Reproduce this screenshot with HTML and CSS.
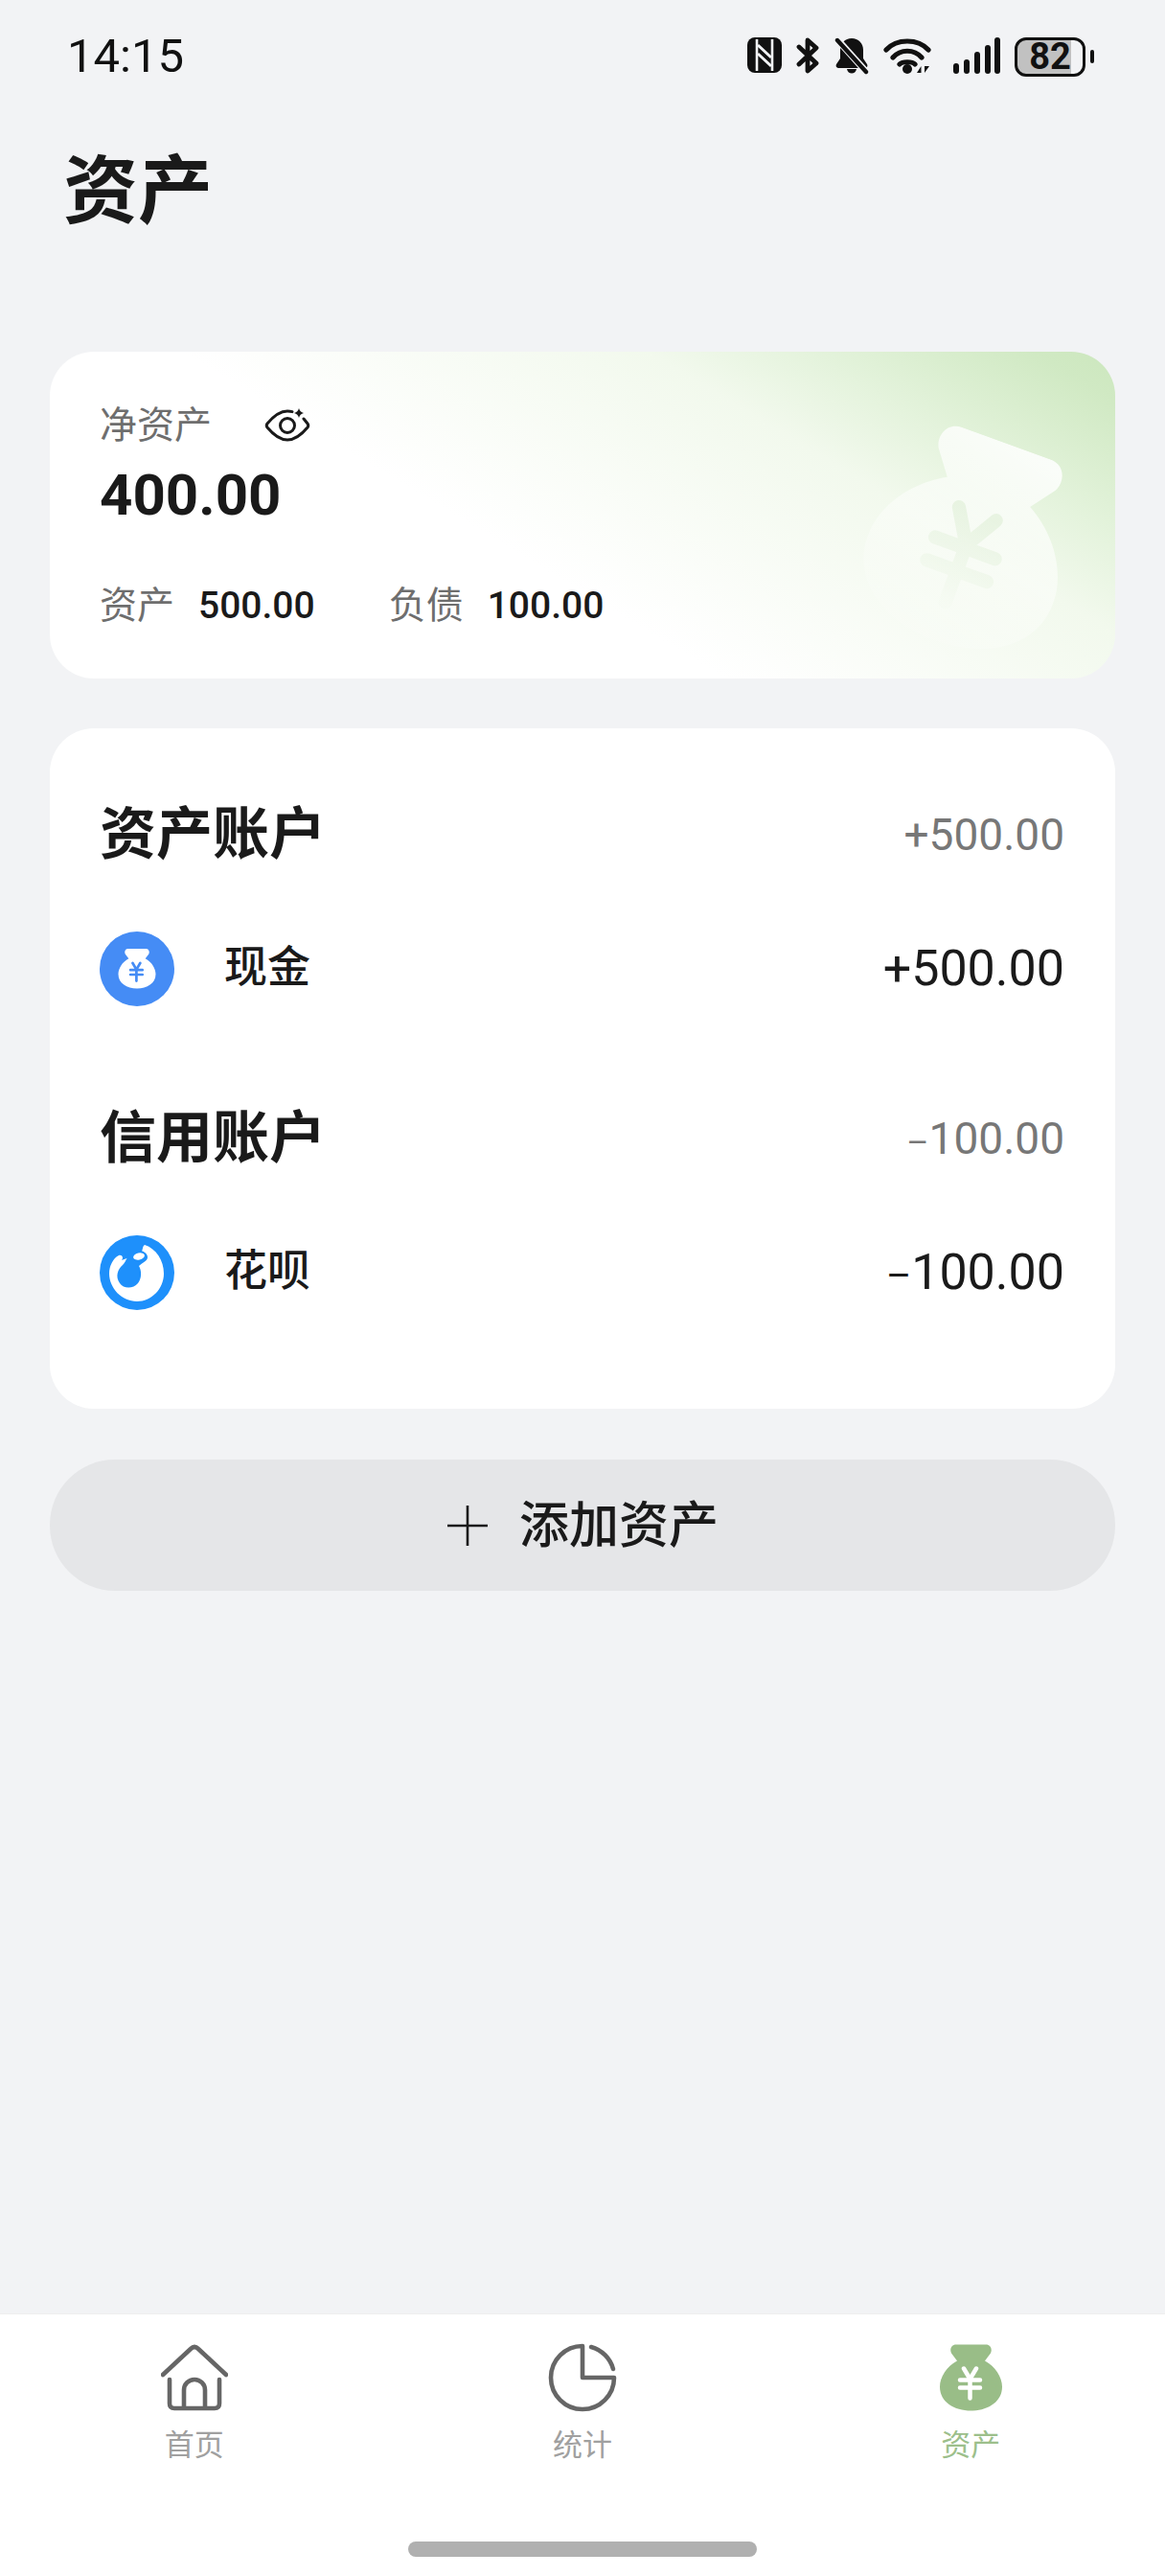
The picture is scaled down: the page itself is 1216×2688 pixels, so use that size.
FILE: index.html
```html
<!DOCTYPE html>
<html lang="zh-CN">

<head>
    <meta charset="UTF-8">
    <meta name="viewport" content="width=device-width, initial-scale=1.0">
    <title>资产</title>

    <link rel="stylesheet" href="styles.css">

</head>

<body>
    <div class="status-bar">
        <span class="time">14:15</span>
        <div class="status-icons">
            <svg width="36" height="37" viewBox="0 0 36 37">
                <rect width="36" height="37" rx="8" fill="#111"/>
                <path d="M10 2V35M26 2V35" fill="none" stroke="#f2f3f5" stroke-width="2.6"/>
                <path d="M11 8L25 21M11 17L25 30" fill="none" stroke="#f2f3f5" stroke-width="3"/>
            </svg>
            <svg width="25" height="38" viewBox="0 0 25 38">
                <path d="M3 10L21 27L12 35V3L21 11L3 28" fill="none" stroke="#111" stroke-width="4.8" stroke-linejoin="round" stroke-linecap="round"/>
            </svg>
            <svg width="36" height="39" viewBox="0 0 36 39">
                <path d="M18 1C11 1 6 6 6 13V22L2 28C1 30 2 32 5 32H31C34 32 35 30 34 28L30 22V13C30 6 25 1 18 1Z" fill="#111"/>
                <path d="M13 33H23C22 39 14 39 13 33Z" fill="#111"/>
                <path d="M1 0L35 38" stroke="#f2f3f5" stroke-width="7"/>
                <path d="M3 3L33 36" stroke="#111" stroke-width="4.4" stroke-linecap="round"/>
            </svg>
            <svg class="wifi" width="50" height="38" viewBox="0 0 50 38">
                <path d="M3 13C14 1 36 1 47 13M10 21C18 12 32 12 40 21M17 28C20 25 30 25 33 28" fill="none" stroke="#111" stroke-width="5.2" stroke-linecap="round"/>
                <circle cx="25" cy="33" r="5" fill="#111"/>
                <path d="M35 37L39.5 30V37ZM43 30L48 30L43 37Z" fill="#111"/>
            </svg>
            <svg width="49" height="38" viewBox="0 0 49 38">
                <rect x="0" y="27" width="6" height="11" rx="3" fill="#111"/>
                <rect x="11" y="23" width="6" height="15" rx="3" fill="#111"/>
                <rect x="22" y="15" width="6" height="23" rx="3" fill="#111"/>
                <rect x="33" y="8" width="6" height="30" rx="3" fill="#111"/>
                <rect x="43" y="0" width="6" height="38" rx="3" fill="#111"/>
            </svg>
            <div class="battery"><span class="battery-level">82</span><span class="battery-nub"></span></div>
        </div>
    </div>

    <h1 class="page-title">资产</h1>

    <section class="card net-card">
        <svg class="net-bag" width="206" height="219" viewBox="0 0 65 69">
            <path d="M17 0H48C53 0 55 5 53 9L47 17C58 23 65 34 65 44C65 60 50 69 32.5 69C15 69 0 60 0 44C0 34 7 23 18 17L12 9C10 5 12 0 17 0Z" fill="url(#bagFade)"/>
            <path d="M25 25L31.5 36L38 25M21 37H42M21 45H42M31.5 36V56" fill="none" stroke="url(#yenFade)" stroke-width="4.5" stroke-linecap="round"/>
            <defs>
                <linearGradient id="bagFade" x1="0.6" y1="0" x2="0.4" y2="1">
                    <stop offset="0" stop-color="#fff" stop-opacity="0.85"/>
                    <stop offset="1" stop-color="#fff" stop-opacity="0.1"/>
                </linearGradient>
                <linearGradient id="yenFade" gradientUnits="userSpaceOnUse" x1="32" y1="25" x2="30" y2="56">
                    <stop offset="0" stop-color="#d9eccf" stop-opacity="0.5"/>
                    <stop offset="1" stop-color="#d9eccf" stop-opacity="0.05"/>
                </linearGradient>
            </defs>
        </svg>
        <div class="net-head">
            <span class="net-label">净资产</span>
            <svg width="48" height="36" viewBox="0 0 48 36">
                <path d="M29 3.6C27.5 3.2 26 3 24 3C15 3 8 10 3 16Q1.5 18 3 20C8 26 15 33 24 33C33 33 40 26 45 20Q46.5 18 45 16L41 11" fill="none" stroke="#1a1a1a" stroke-width="3" stroke-linecap="round"/>
                <circle cx="24" cy="18" r="7.5" fill="none" stroke="#1a1a1a" stroke-width="3"/>
                <path d="M36 0Q37 4 41 5Q37 6 36 10Q35 6 31 5Q35 4 36 0Z" fill="#1a1a1a"/>
            </svg>
        </div>
        <div class="net-value">400.00</div>
        <div class="net-row">
            <span class="net-label">资产</span>
            <span class="net-num">500.00</span>
            <span class="net-label net-second">负债</span>
            <span class="net-num">100.00</span>
        </div>
    </section>

    <section class="card accounts">
        <div class="group-head">
            <span class="group-title">资产账户</span>
            <span class="group-sum">+500.00</span>
        </div>
        <div class="account">
            <svg class="account-icon" width="78" height="78" viewBox="0 0 78 78">
                <circle cx="39" cy="39" r="39" fill="#458cf5"/>
                <path transform="translate(19.5 18) scale(0.6)" d="M17 0H48C53 0 55 5 53 9L47 17C58 23 65 34 65 44C65 60 50 69 32.5 69C15 69 0 60 0 44C0 34 7 23 18 17L12 9C10 5 12 0 17 0Z" fill="#fff"/>
                <path transform="translate(19.5 18) scale(0.6)" d="M25 25L31.5 36L38 25M21 37H42M21 45H42M31.5 36V56" fill="none" stroke="#458cf5" stroke-width="4.5" stroke-linecap="round"/>
            </svg>
            <span class="account-name">现金</span>
            <span class="account-sum">+500.00</span>
        </div>
        <div class="group-head group-credit">
            <span class="group-title">信用账户</span>
            <span class="group-sum"><span class="minus">–</span>100.00</span>
        </div>
        <div class="account">
            <svg class="account-icon" width="78" height="78" viewBox="0 0 78 78">
                <circle cx="39" cy="39" r="39" fill="#1e90fb"/>
                <path d="M47 10C59 14 67 26 67 40C67 56 54 69 39 69C23 69 10 55 10 40C10 32 14 24 20 21C24 20 25 24 23 26L34 22L44 17C45 14 45 11 47 10Z" fill="#fff"/>
                <path d="M33 17C41 14 50 17 50 23C50 27 45 28 41 32C44 37 44 45 40 50C35 56 25 56 21 50C16 43 19 35 24 31C28 27 29 21 33 17Z" fill="#1e90fb"/>
                <ellipse cx="41" cy="22" rx="6" ry="3.5" transform="rotate(-12 41 22)" fill="#fff"/>
            </svg>
            <span class="account-name">花呗</span>
            <span class="account-sum"><span class="minus">–</span>100.00</span>
        </div>
    </section>

    <div class="add-btn">
        <svg width="44" height="44" viewBox="0 0 44 44">
            <path d="M22 1V43M1 22H43" stroke="#1a1a1a" stroke-width="2.6"/>
        </svg>
        <span class="add-text">添加资产</span>
    </div>

    <nav class="tab-bar">
        <div class="tabs">
            <div class="tab">
                <svg width="70" height="72" viewBox="0 0 70 72">
                    <path d="M2 33L31 6Q35 2 39 6L68 33M9 38V63Q9 68 14 68H56Q61 68 61 63V38M24 68V49A11 11 0 0 1 46 49V68" fill="none" stroke="#666" stroke-width="4.6" stroke-linecap="round" stroke-linejoin="round"/>
                </svg>
                <span class="tab-label">首页</span>
            </div>
            <div class="tab">
                <svg width="74" height="72" viewBox="0 0 74 72">
                    <path d="M37 3A33 33 0 1 0 70 36H37ZM46 4A33 33 0 0 1 69 27" fill="none" stroke="#666" stroke-width="4.6" stroke-linejoin="round" stroke-linecap="round"/>
                </svg>
                <span class="tab-label">统计</span>
            </div>
            <div class="tab tab-active">
                <svg width="65" height="72" viewBox="0 0 65 72">
                    <path transform="translate(0 1.5)" d="M17 0H48C53 0 55 5 53 9L47 17C58 23 65 34 65 44C65 60 50 69 32.5 69C15 69 0 60 0 44C0 34 7 23 18 17L12 9C10 5 12 0 17 0Z" fill="#99bd87"/>
                    <path transform="translate(0 1.5)" d="M25 25L31.5 36L38 25M21 37H42M21 45H42M31.5 36V56" fill="none" stroke="#fff" stroke-width="4.5" stroke-linecap="round"/>
                </svg>
                <span class="tab-label">资产</span>
            </div>
        </div>
        <div class="home-bar"></div>
    </nav>
</body>

</html>
```
FILE: styles.css
```css
* {
    box-sizing: border-box;
}

html, body {
    margin: 0;
    height: 100%;
}

body {
    display: flex;
    flex-direction: column;
    height: 2688px;
    overflow: hidden;
    background: #f2f3f5;
    color: #1a1a1a;
    font-family: Roboto, "Noto Sans CJK SC", sans-serif;
}

.status-bar {
    display: flex;
    justify-content: space-between;
    align-items: center;
    height: 42px;
    margin-top: 38px;
    padding: 0 74px 0 70px;
}

.time {
    font-size: 49px;
    line-height: 42px;
    color: #111;
}

.status-icons {
    display: flex;
    align-items: flex-start;
    gap: 15px;
}

.status-icons .wifi {
    margin-right: 8px;
}

.battery {
    display: flex;
    align-items: center;
    gap: 5px;
}

.battery-level {
    width: 74px;
    height: 41px;
    border: 3.5px solid #111;
    border-radius: 12px;
    background: linear-gradient(to right, #c1c1c1 82%, transparent 82%);
    font-size: 38px;
    font-weight: 700;
    line-height: 34px;
    text-align: center;
    color: #111;
}

.battery-nub {
    width: 4px;
    height: 14px;
    border-radius: 2px;
    background: #111;
}

.page-title {
    margin: 81px 0 0 66px;
    font-size: 78px;
    font-weight: 700;
    line-height: 80px;
}

.card {
    width: 1112px;
    margin-left: 52px;
    border-radius: 46px;
    background: #fff;
}

.net-card {
    position: relative;
    height: 341px;
    margin-top: 126px;
    padding: 55px 52px 0;
    overflow: hidden;
    background: linear-gradient(31deg, #fff 42%, #f2f9ed 71%, #e4f3dc 81%, #d0e9c3 95%, #cce7be 100%);
}

.net-bag {
    position: absolute;
    left: 858px;
    top: 89px;
    transform: rotate(20deg);
}

.net-head {
    position: relative;
    display: flex;
    align-items: center;
    gap: 55px;
    height: 44px;
}

.net-label {
    font-size: 39px;
    line-height: 46px;
    color: #6e6e6e;
}

.net-value {
    position: relative;
    margin-top: 21px;
    font-size: 60px;
    font-weight: 700;
    line-height: 60px;
}

.net-row {
    position: relative;
    display: flex;
    align-items: center;
    height: 46px;
    margin-top: 62px;
}

.net-num {
    margin-left: 25px;
    font-size: 39px;
    font-weight: 500;
    line-height: 46px;
}

.net-second {
    margin-left: 77px;
}

.accounts {
    height: 710px;
    margin-top: 52px;
    padding: 73px 53px 0 52px;
}

.group-head {
    display: flex;
    justify-content: space-between;
    align-items: center;
    height: 70px;
}

.group-credit {
    margin-top: 100px;
}

.group-title {
    padding-top: 6px;
    font-size: 59px;
    font-weight: 700;
    line-height: 70px;
}

.group-sum {
    padding-top: 6px;
    font-size: 46px;
    color: #777;
}

.minus {
    font-size: 0.77em;
}

.account {
    display: flex;
    align-items: center;
    height: 78px;
    margin-top: 69px;
}

.account-icon {
    flex: none;
}

.account-name {
    margin-left: 52px;
    padding-bottom: 11px;
    font-size: 45px;
    font-weight: 500;
}

.account-sum {
    margin-left: auto;
    padding-bottom: 2px;
    font-size: 52px;
}

.add-btn {
    display: flex;
    justify-content: center;
    align-items: center;
    gap: 32px;
    width: 1112px;
    height: 137px;
    margin: 53px 0 0 52px;
    border-radius: 68px;
    background: #e5e6e8;
}

.add-text {
    padding-bottom: 8px;
    font-size: 52px;
    font-weight: 500;
}

.tab-bar {
    margin-top: auto;
    height: 274px;
    border-top: 1px solid #eeeeee;
    background: #fff;
}

.tabs {
    display: grid;
    grid-template-columns: repeat(3, 1fr);
    padding-top: 30px;
}

.tab {
    display: flex;
    flex-direction: column;
    align-items: center;
}

.tab-label {
    margin-top: 15px;
    font-size: 31px;
    line-height: 40px;
    color: #a0a0a0;
}

.tab-active .tab-label {
    color: #9cbf8b;
}

.home-bar {
    width: 364px;
    height: 16px;
    margin: 80px auto 0;
    border-radius: 8px;
    background: #b0b0b0;
}
```
